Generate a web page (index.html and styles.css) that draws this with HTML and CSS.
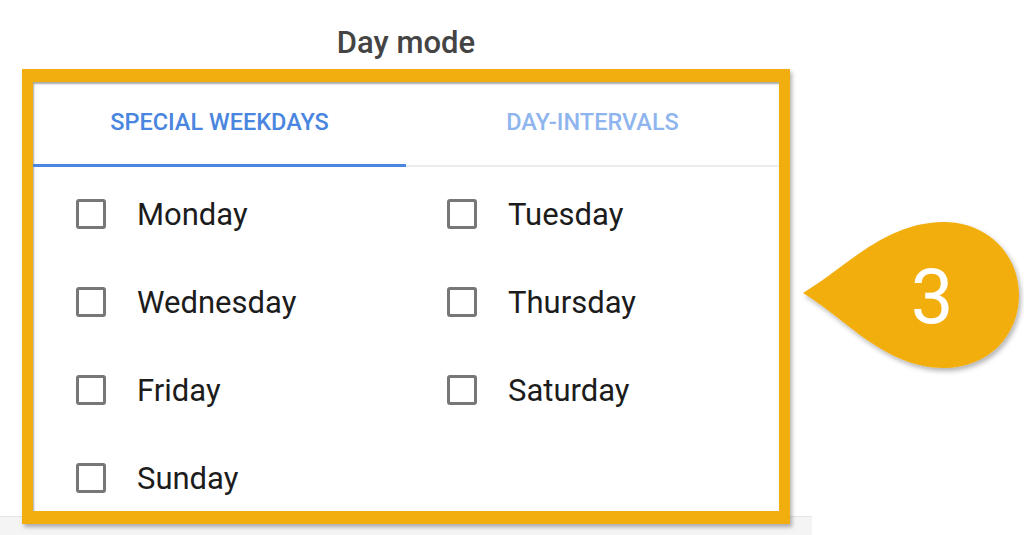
FILE: index.html
```html
<!DOCTYPE html>
<html lang="en">
<head>
    <meta charset="UTF-8">
    <meta name="viewport" content="width=device-width, initial-scale=1.0">
    <title>Day mode</title>
    <link rel="stylesheet" href="styles.css">
</head>
<body>
    <div class="page">
        <h1 class="titulo">Day mode</h1>
        <div class="moldura">
            <div class="painel">
                <div class="abas">
                    <div class="aba ativa">SPECIAL WEEKDAYS</div>
                    <div class="aba">DAY-INTERVALS</div>
                </div>
                <div class="dias">
                    <label class="dia"><span class="caixa"></span>Monday</label>
                    <label class="dia"><span class="caixa"></span>Tuesday</label>
                    <label class="dia"><span class="caixa"></span>Wednesday</label>
                    <label class="dia"><span class="caixa"></span>Thursday</label>
                    <label class="dia"><span class="caixa"></span>Friday</label>
                    <label class="dia"><span class="caixa"></span>Saturday</label>
                    <label class="dia"><span class="caixa"></span>Sunday</label>
                </div>
            </div>
        </div>
    </div>
    <div class="rodape"></div>

    <!-- balão com o número do passo -->
    <svg class="balao" width="240" height="170" viewBox="790 210 240 170">
        <defs>
            <filter id="sombra" x="-20%" y="-20%" width="140%" height="140%">
                <feDropShadow dx="2" dy="3" stdDeviation="2.5" flood-color="#000" flood-opacity="0.3"/>
            </filter>
        </defs>
        <path d="M803,293 C845,268 885,222 944,222 C988,222 1019,255 1019,295 C1019,336 988,368 944,368 C885,368 845,318 803,293 Z" fill="#f1ae0e" filter="url(#sombra)"/>
        <text x="932" y="323" text-anchor="middle" class="numero">3</text>
    </svg>
</body>
</html>
```

FILE: styles.css
```css
body {
    margin: 0;
    font-family: Roboto, "Liberation Sans", sans-serif;
    background-color: #fff;
    width: 1024px;
    height: 535px;
    overflow: hidden;
    position: relative;
}
.page {
    width: 812px;
    position: relative;
    z-index: 1;
}
.titulo {
    margin: 0;
    padding-top: 26px;
    margin-left: 22px;
    width: 768px;
    height: 69px;
    box-sizing: border-box;
    text-align: center;
    font-size: 31px;
    font-weight: 500;
    line-height: 34px;
    color: #444;
}
.moldura {
    margin-left: 22px;
    width: 768px;
    height: 455px;
    box-sizing: border-box;
    border-style: solid;
    border-color: #f1ae0e;
    border-width: 13px 11px 13px 11px;
    box-shadow: 2px 3px 4px rgba(0, 0, 0, 0.3);
}
.painel {
    height: 100%;
    background-color: #fff;
    overflow: hidden;
    box-shadow: inset 1px 2px 2px rgba(0, 0, 0, 0.35);
}
.abas {
    display: flex;
    height: 83px;
    border-bottom: 2px solid #ececec;
}
.aba {
    flex: 1;
    display: flex;
    align-items: center;
    justify-content: center;
    font-size: 23.5px;
    font-weight: 500;
    color: #8fb5ee;
    padding-bottom: 3px;
    box-sizing: border-box;
}
.aba.ativa {
    color: #4a86e0;
    border-bottom: 3px solid #4a86e0;
    margin-bottom: -2px;
}
.dias {
    display: grid;
    grid-template-columns: 1fr 1fr;
    grid-auto-rows: 88px;
    padding-top: 3px;
}
.dia {
    display: flex;
    align-items: center;
    padding-left: 43px;
    font-size: 31px;
    color: #1c1c1c;
}
.dia:nth-child(even) {
    padding-left: 41px;
}
.caixa {
    width: 24px;
    height: 24px;
    border: 3px solid #777;
    border-radius: 3px;
    margin-right: 31px;
    flex-shrink: 0;
}
.rodape {
    position: absolute;
    left: 0;
    top: 516px;
    width: 812px;
    height: 19px;
    background-color: #f4f4f4;
    border-top: 1px solid #e6e6e6;
}
.balao {
    position: absolute;
    left: 790px;
    top: 210px;
}
.numero {
    font-family: Roboto, "Liberation Sans", sans-serif;
    font-size: 76px;
    fill: #fff;
}
```
